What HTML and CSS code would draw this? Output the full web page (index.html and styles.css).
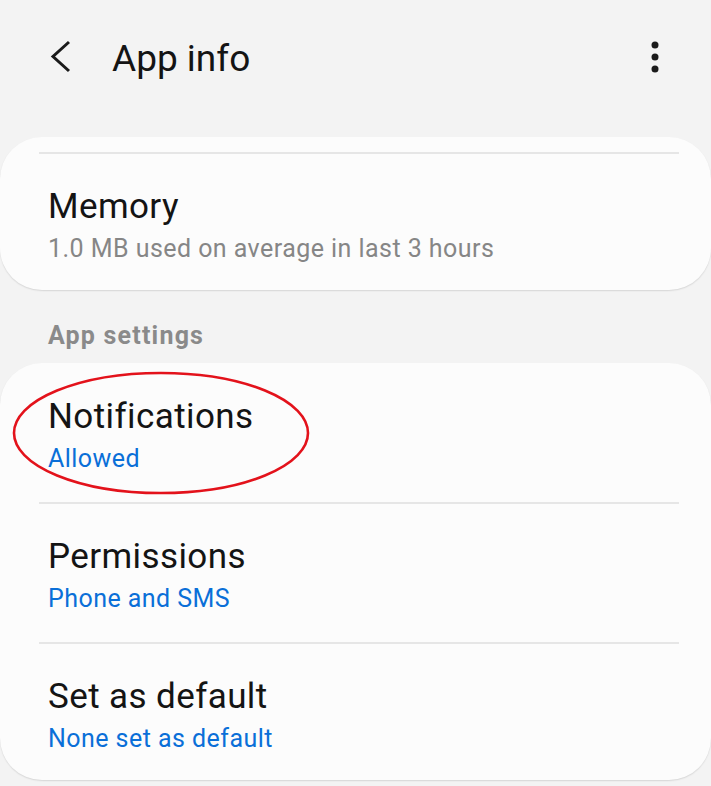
FILE: index.html
```html
<!DOCTYPE html>
<html lang="en">
<head>
<meta charset="utf-8">
<title>App info</title>
<link rel="stylesheet" href="styles.css">
</head>
<body>
<header class="appbar">
  <svg class="back" width="36" height="44" viewBox="0 0 36 44" aria-hidden="true">
    <path d="M25 6 L9 20.5 L25 35" fill="none" stroke="#1a1a1a" stroke-width="3"/>
  </svg>
  <h1 class="title">App info</h1>
  <svg class="more" width="20" height="44" viewBox="0 0 20 44" aria-hidden="true">
    <circle cx="10" cy="8" r="3.5" fill="#1a1a1a"/>
    <circle cx="10" cy="20" r="3.5" fill="#1a1a1a"/>
    <circle cx="10" cy="32" r="3.5" fill="#1a1a1a"/>
  </svg>
</header>

<section class="card card-top">
  <div class="divider"></div>
  <div class="item item-last">
    <div class="item-title">Memory</div>
    <div class="item-sub gray">1.0 MB used on average in last 3 hours</div>
  </div>
</section>

<div class="section-label">App settings</div>

<section class="card card-settings">
  <div class="item">
    <div class="item-title">Notifications</div>
    <div class="item-sub blue">Allowed</div>
  </div>
  <div class="divider"></div>
  <div class="item">
    <div class="item-title">Permissions</div>
    <div class="item-sub blue">Phone and SMS</div>
  </div>
  <div class="divider"></div>
  <div class="item item-last">
    <div class="item-title">Set as default</div>
    <div class="item-sub blue">None set as default</div>
  </div>
  <svg class="mark" width="330" height="140" viewBox="0 0 330 140" aria-hidden="true">
    <ellipse cx="161" cy="70" rx="147" ry="60" fill="none" stroke="#e3121b" stroke-width="2.6"/>
  </svg>
</section>
</body>
</html>
```

FILE: styles.css
```css
html, body {
  margin: 0;
  padding: 0;
}
body {
  background: #f3f3f3;
  font-family: Roboto, "Noto Sans", "Liberation Sans", sans-serif;
  color: #141414;
  width: 711px;
  height: 786px;
  overflow: hidden;
}
.appbar {
  box-sizing: border-box;
  height: 137px;
  padding: 37px 46px 0 44px;
  display: flex;
  align-items: flex-start;
}
.back {
  display: block;
  flex: none;
  margin-top: -1px;
}
.title {
  margin: 0 0 0 32px;
  font-size: 37px;
  font-weight: 400;
  line-height: 44px;
  flex: 1;
}
.more {
  display: block;
  flex: none;
}
.card {
  background: #fcfcfc;
  border-radius: 42px;
  box-shadow: 0 1px 1.5px rgba(0, 0, 0, 0.12);
  position: relative;
}
.card-top {
  padding-top: 15px;
}
.card-settings {
  padding-top: 1px;
}
.divider {
  height: 2px;
  background: #e6e6e6;
  margin: 0 32px 0 39px;
}
.item {
  padding: 33px 48px 28px 48px;
}
.item-last {
  padding-bottom: 26px;
}
.item-title {
  font-size: 35px;
  line-height: 40px;
  letter-spacing: 0.4px;
}
.item-sub {
  font-size: 25px;
  line-height: 30px;
  letter-spacing: 0.45px;
  margin-top: 7px;
}
.gray {
  color: #868686;
}
.blue {
  color: #0a6fd8;
}
.section-label {
  font-size: 25px;
  font-weight: 700;
  line-height: 30px;
  letter-spacing: 1.2px;
  color: #8a8a8a;
  padding: 31px 48px 12px;
}
.mark {
  position: absolute;
  left: 0;
  top: 0;
  pointer-events: none;
}
```
